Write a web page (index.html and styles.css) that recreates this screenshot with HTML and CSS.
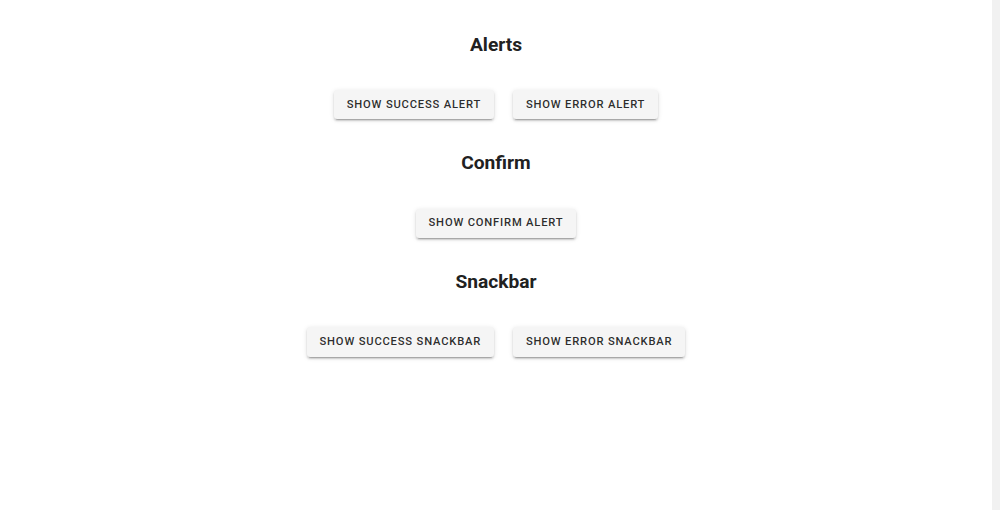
FILE: index.html
```html
<!DOCTYPE html>
<html lang="en">
<head>
<meta charset="utf-8">
<title>Alerts</title>
<link rel="stylesheet" href="styles.css">
</head>
<body>
<main class="page">
  <section class="section">
    <h2 class="title">Alerts</h2>
    <div class="row">
      <button class="btn">Show success alert</button>
      <button class="btn">Show error alert</button>
    </div>
  </section>
  <section class="section">
    <h2 class="title">Confirm</h2>
    <div class="row">
      <button class="btn">Show confirm alert</button>
    </div>
  </section>
  <section class="section">
    <h2 class="title">Snackbar</h2>
    <div class="row">
      <button class="btn">Show success snackbar</button>
      <button class="btn">Show error snackbar</button>
    </div>
  </section>
</main>
<div class="scrollbar"></div>
</body>
</html>
```
FILE: styles.css
```css
html {
  background: #fff;
}
body {
  margin: 0;
  display: flex;
  height: 100vh;
  overflow: hidden;
  font-family: Roboto, "Liberation Sans", sans-serif;
  color: rgba(0, 0, 0, 0.87);
}
.page {
  flex: 1;
  display: flex;
  flex-direction: column;
  align-items: center;
  padding-top: 31.7px;
  gap: 31.5px;
}
.scrollbar {
  width: 8px;
  flex: none;
  height: 100%;
  background: #f1f1f1;
}
.section {
  display: flex;
  flex-direction: column;
  align-items: center;
}
.title {
  margin: 0 0 32.5px;
  font-size: 19.2px;
  line-height: 1.334;
  font-weight: 700;
  color: #212121;
}
.row {
  display: flex;
  gap: 19.2px;
}
.btn {
  font-family: Roboto, "Liberation Sans", sans-serif;
  font-size: 11.2px;
  font-weight: 500;
  line-height: 1.75;
  letter-spacing: 0.073em;
  text-transform: uppercase;
  padding: 4.8px 12.8px;
  border: 0;
  border-radius: 3.2px;
  background: #f5f5f5;
  color: rgba(0, 0, 0, 0.84);
  box-shadow: 0px 3px 1px -2px rgba(0,0,0,0.2), 0px 2px 2px 0px rgba(0,0,0,0.14), 0px 1px 5px 0px rgba(0,0,0,0.12);
  cursor: pointer;
}
```
